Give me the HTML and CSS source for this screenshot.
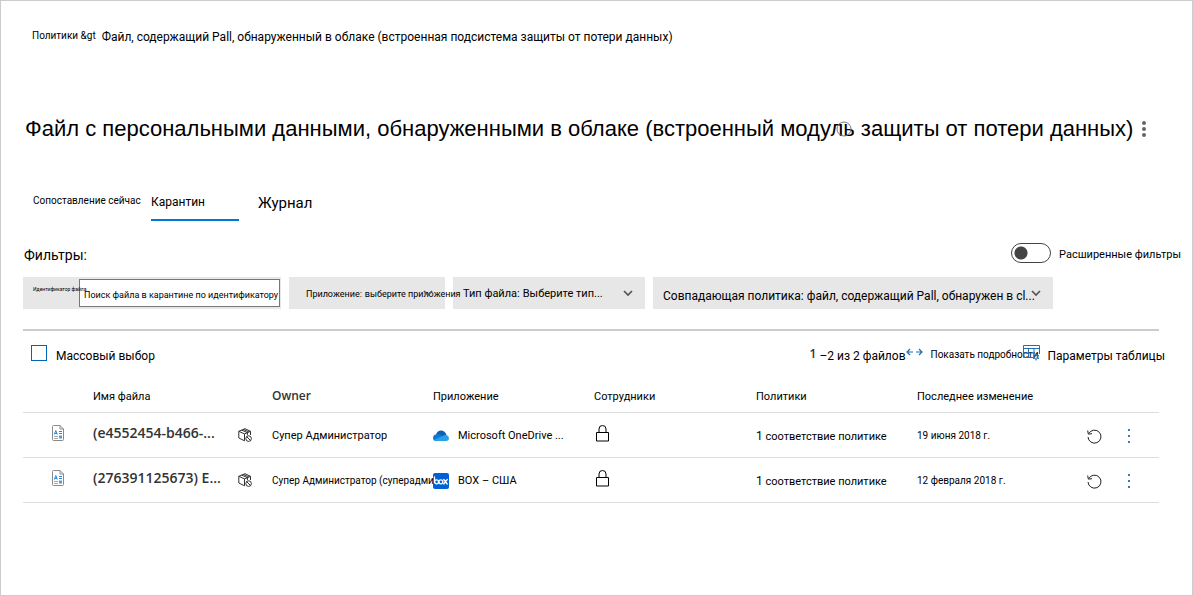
FILE: index.html
```html
<!DOCTYPE html>
<html lang="ru">
<head>
<meta charset="utf-8">
<title>Карантин</title>
<link rel="stylesheet" href="styles.css">
</head>
<body>
<svg class="defs" aria-hidden="true">
  <symbol id="file" viewBox="0 0 12 16"><path d="M.5 1.500q0-1 1-1H8L11.500 4v10.500q0 1-1 1h-9q-1 0-1-1zM8 .5V4h3.500" fill="#fff" stroke="#8a8a8a"/><path d="M2.300 9.500l1.500-4 1.500 4M3 8.500h2M7 6.500h3M7 8.500h3" stroke="#2b88d8" fill="none"/><path d="M2 11.500h4M2 13.500h4" stroke="#aaa"/><path d="M7 10.500h3v3H7z" fill="#4fa0e0"/></symbol>
  <symbol id="box" viewBox="0 0 14 14"><path d="M6.500 12.800L.8 10V3.300L7 .7l5.500 2.600V7M.8 3.300l5.700 2.600 6-2.600M6.500 5.900v6.900M3.600 2.100l5.800 2.500v2.500M5.300 1.400l5.600 2.500" fill="none" stroke="#333"/><circle cx="10.600" cy="10.600" r="2.800" fill="#fff" stroke="#333"/><path d="M8.700 8.700l3.800 3.800" stroke="#333"/></symbol>
  <symbol id="lock" viewBox="0 0 13 17"><path d="M.5 7.500h12v8.500H.5zM3 7.500V4a3.500 3.500 0 0 1 7 0v3.500" fill="none" stroke="#000"/></symbol>
  <symbol id="undo" viewBox="0 0 15 15"><path d="M1.800 4.500A6.500 6.500 0 1 1 1 8M.7 1.500l.6 3.600 3.700-.4" fill="none" stroke="#222"/></symbol>
  <symbol id="dots" viewBox="0 0 4 14"><path d="M1 0h2v2H1zM1 6h2v2H1zM1 12h2v2H1z" fill="#3a78b8"/></symbol>
  <symbol id="chev" viewBox="0 0 10 7"><path d="M1 1l4 4 4-4" fill="none" stroke="#555" stroke-width="1.700"/></symbol>
</svg>
<main class="page">
  <nav class="crumbs"><a class="crumb-root" href="#">Политики &amp;gt</a><span>Файл, содержащий Pall, обнаруженный в облаке (встроенная подсистема защиты от потери данных)</span></nav>

  <header class="title-bar">
    <h1 class="title">Файл с персональными данными, обнаруженными в облаке (встроенный модуль защиты от потери данных)</h1>
    <svg class="title-info" viewBox="0 0 16 16" aria-hidden="true"><circle cx="8" cy="8" r="7" fill="none" stroke="#777"/></svg>
    <button class="icon-button title-menu" aria-label="Меню"><svg width="4" height="16" viewBox="0 0 4 16"><g fill="#666"><circle cx="2" cy="2" r="2"/><circle cx="2" cy="8" r="2"/><circle cx="2" cy="14" r="2"/></g></svg></button>
  </header>

  <nav class="tabs">
    <a class="tab tab-now" href="#">Сопоставление сейчас</a>
    <a class="tab tab-active" href="#">Карантин</a>
    <a class="tab tab-log" href="#">Журнал</a>
  </nav>

  <div class="filter-head">
    <h2 class="filter-title">Фильтры:</h2>
    <label class="switch"><input class="switch-input" type="checkbox" role="switch"><span class="switch-text">Расширенные фильтры</span></label>
  </div>

  <form class="filters">
    <div class="filter filter-file"><label class="tiny" for="fid">Идентификатор файла</label><input class="search" id="fid" type="text" placeholder="Поиск файла в карантине по идентификатору"></div>
    <div class="filter filter-app"><label for="app">Приложение:</label><select class="pick" id="app"><option>выберите приложения</option></select><svg class="chev"><use href="#chev"/></svg></div>
    <div class="filter filter-type"><label for="type">Тип файла:</label><select class="pick" id="type"><option>Выберите тип...</option></select><svg class="chev"><use href="#chev"/></svg></div>
    <div class="filter filter-policy"><label for="pol">Совпадающая политика:</label><select class="pick" id="pol"><option>файл, содержащий Pall, обнаружен в cl...</option></select><svg class="chev"><use href="#chev"/></svg></div>
  </form>

  <section class="results">
    <div class="toolbar">
      <label class="bulk"><input class="check" type="checkbox"><span>Массовый выбор</span></label>
      <p class="count"><span class="count-from">1</span><span>–2 из 2 файлов</span></p>
      <button class="tool tool-details"><svg width="17" height="8" viewBox="0 0 17 8"><path d="M7 4H1M4 1L1 4l3 3M10 4h6M13 1l3 3-3 3" fill="none" stroke="#1f6fb8" stroke-width="1.200"/></svg><span>Показать подробности</span></button>
      <button class="tool tool-table"><svg width="17" height="16" viewBox="0 0 17 16"><path d="M10 12.500H.5V.5h16V9M.5 3.500h16M.5 8h11M5.500 3.500v9M11 3.500V9" fill="none" stroke="#1f6fb8"/><circle cx="13" cy="12" r="2" fill="none" stroke="#1f6fb8"/><path d="M13 8.500v1.500M13 14v1.500M10 10.300l1.300.7M14.700 13l1.300.7M10 13.700l1.300-.7M14.700 11l1.300-.7" stroke="#1f6fb8"/></svg><span>Параметры таблицы</span></button>
    </div>
    <table class="grid">
      <colgroup><col class="c-icon"><col class="c-name"><col class="c-std"><col class="c-std"><col class="c-collab"><col class="c-std"><col class="c-date"><col></colgroup>
      <thead><tr><th></th><th>Имя файла</th><th class="owner-head">Owner</th><th>Приложение</th><th>Сотрудники</th><th>Политики</th><th>Последнее изменение</th><th></th></tr></thead>
      <tbody>
        <tr>
          <td class="raised cell-icon"><svg class="i-file"><use href="#file"/></svg></td>
          <td class="raised"><div class="name"><a class="name-link" href="#">(e4552454-b466-...</a><svg class="i-box"><use href="#box"/></svg></div></td>
          <td>Супер Администратор</td>
          <td><div class="app"><svg class="i-app" viewBox="0 0 16 16"><path d="M3 6.500Q4.500 2.500 8 2.500q4 0 5.500 4.500l-6 3z" fill="#0f5fb4"/><path d="M2.500 6.500Q6 5 9.500 8l-6 5Q0 13 0 10q0-3 2.500-3.500z" fill="#1279d0"/><path d="M9.500 8q2-1.300 4-1 2.500.8 2.500 3.300Q16 13 13 13H3.500Q1.500 13 .8 12z" fill="#28a0e8"/></svg><span>Microsoft OneDrive ...</span></div></td>
          <td class="raised"><svg class="i-lock"><use href="#lock"/></svg></td>
          <td><span class="num">1</span> соответствие политике</td>
          <td class="small">19 июня 2018 г.</td>
          <td><div class="actions"><button class="icon-button" aria-label="Восстановить"><svg class="i-undo"><use href="#undo"/></svg></button><button class="icon-button" aria-label="Ещё"><svg class="i-dots"><use href="#dots"/></svg></button></div></td>
        </tr>
        <tr>
          <td class="raised cell-icon"><svg class="i-file"><use href="#file"/></svg></td>
          <td class="raised"><div class="name"><a class="name-link" href="#">(276391125673) E...</a><svg class="i-box"><use href="#box"/></svg></div></td>
          <td class="small">Супер Администратор (суперадми...</td>
          <td><div class="app"><svg class="i-app" viewBox="0 0 16 16"><rect width="16" height="16" rx="2" fill="#0061d5"/><path d="M1.500 4v5.500M10.800 6.500l3.400 4.500M14.200 6.500l-3.400 4.500" fill="none" stroke="#fff" stroke-width="1.300" stroke-linecap="round"/><circle cx="3.600" cy="8.800" r="2" fill="none" stroke="#fff" stroke-width="1.300"/><circle cx="7.900" cy="8.800" r="2" fill="none" stroke="#fff" stroke-width="1.300"/></svg><span>BOX – США</span></div></td>
          <td class="raised"><svg class="i-lock"><use href="#lock"/></svg></td>
          <td><span class="num">1</span> соответствие политике</td>
          <td class="small">12 февраля 2018 г.</td>
          <td><div class="actions"><button class="icon-button" aria-label="Восстановить"><svg class="i-undo"><use href="#undo"/></svg></button><button class="icon-button" aria-label="Ещё"><svg class="i-dots"><use href="#dots"/></svg></button></div></td>
        </tr>
      </tbody>
    </table>
  </section>
</main>
</body>
</html>
```
FILE: styles.css
```css
* { box-sizing: border-box; }
body { margin: 0; background: #fff; color: #000; font: 12px/16px Roboto, "Liberation Sans", sans-serif; }
a { color: inherit; text-decoration: none; }
button, input, select { font: inherit; color: inherit; }
svg { display: block; flex: none; }
h1, h2, p { margin: 0; font-weight: 400; }
.defs { position: absolute; width: 0; height: 0; }
.page { min-height: 100vh; border: 1px solid #ccc; padding: 27px 0 24px 22px; white-space: nowrap; }
.crumbs { display: flex; gap: 6px; padding-left: 9px; line-height: 18px; }
.crumb-root { font-size: 10px; line-height: 16px; }
.title-bar { position: relative; display: flex; align-items: center; gap: 9px; margin-top: 66px; padding-left: 2px; }
.title { font: 22px/34px "Liberation Sans", Arial, sans-serif; }
.title-info { position: absolute; left: 813px; top: 9px; width: 16px; height: 16px; }
.icon-button { display: flex; padding: 0; border: 0; background: none; }
.tabs { display: flex; margin-top: 45px; padding-left: 10px; }
.tab { height: 30px; line-height: 22px; }
.tab-now { width: 118px; font-size: 10px; line-height: 20px; }
.tab-active { width: 88px; border-bottom: 2px solid #0078d4; }
.tab-log { margin-left: 19px; font-size: 15px; line-height: 24px; }
.filter-head { display: flex; align-items: center; justify-content: space-between; margin-top: 18px; padding: 0 11px 0 1px; line-height: 24px; }
.filter-title { padding-top: 4px; font-size: 14px; }
.switch { display: flex; align-items: center; gap: 8px; font-size: 11px; }
.switch-text { padding-top: 3px; line-height: 21px; }
.switch-input { appearance: none; width: 40px; height: 20px; margin: 0; border: 1px solid #444; border-radius: 10px; background: radial-gradient(circle at 9px 9px, #444 6px, transparent 7px); }
.filters { display: flex; gap: 8px; margin-top: 10px; }
.filter { position: relative; display: flex; align-items: center; gap: 3px; height: 32px; padding: 2px 0 0 10px; background: #e7e7e7; }
.filter-file { width: 258px; gap: 0; padding-top: 0; font-size: 9px; }
.tiny { position: relative; z-index: 1; width: 46px; font-size: 5px; line-height: 24px; align-self: flex-start; }
.search { width: 201px; height: 28px; padding: 3px 0 0 4px; border: 1px solid #777; background: #fff; }
.search::placeholder { color: #000; opacity: 1; }
.filter-app { z-index: 1; width: 156px; padding-left: 17px; font-size: 9px; }
.filter-type { width: 192px; font-size: 11px; }
.filter-policy { width: 400px; padding-top: 5px; }
.pick { appearance: none; flex: none; padding: 0; border: 0; background: none; }
.chev { position: absolute; right: 12px; top: 13px; width: 10px; height: 7px; }
.results { margin: 20px 33px 0 0; border-top: 2px solid #ccc; }
.toolbar { display: flex; align-items: center; height: 48px; padding-top: 2px; margin-right: -6px; }
.bulk { display: flex; align-items: center; gap: 9px; margin-right: auto; padding-left: 8px; }
.check { appearance: none; width: 16px; height: 16px; margin: 0 0 6px; border: 1px solid #0067b8; background: #fff; }
.count { display: flex; gap: 3px; }
.count-from { padding-bottom: 4px; font: 600 12px/12px "Open Sans", sans-serif; color: #333; }
.tool { display: flex; align-items: center; padding: 0 0 2px; border: 0; background: none; }
.tool svg { margin-bottom: 6px; }
.tool-details { width: 117px; gap: 8px; font-size: 10px; }
.tool-table { gap: 8px; padding: 0; }
.grid { width: 100%; table-layout: fixed; border-collapse: collapse; font-size: 11px; }
.c-icon { width: 70px; }
.c-name { width: 179px; }
.c-std { width: 161px; }
.c-collab { width: 162px; }
.c-date { width: 170px; }
.grid th, .grid td { height: 45px; padding: 3px 0 0; border-bottom: 1px solid #ddd; text-align: left; font-weight: 400; }
.grid th { height: 33px; }
.grid .owner-head { padding-top: 1px; font: 600 12px/16px "Open Sans", sans-serif; color: #333; }
.grid .raised { padding: 0 0 3px; }
.grid .small { font-size: 10px; }
.cell-icon svg { margin-left: 29px; }
.i-file { width: 12px; height: 16px; }
.name { display: flex; justify-content: space-between; align-items: center; padding-right: 20px; }
.name-link { padding-bottom: 1px; font: 600 14px/16px "Open Sans", sans-serif; color: #333; }
.i-box { width: 14px; height: 14px; margin-top: 3px; }
.app { display: flex; align-items: center; gap: 9px; }
.i-app { width: 16px; height: 16px; }
.i-lock { width: 13px; height: 17px; margin-left: 2px; }
.num { font-size: 12px; }
.actions { display: flex; align-items: center; gap: 25px; }
.i-undo { width: 15px; height: 15px; }
.i-dots { width: 4px; height: 14px; }
```
